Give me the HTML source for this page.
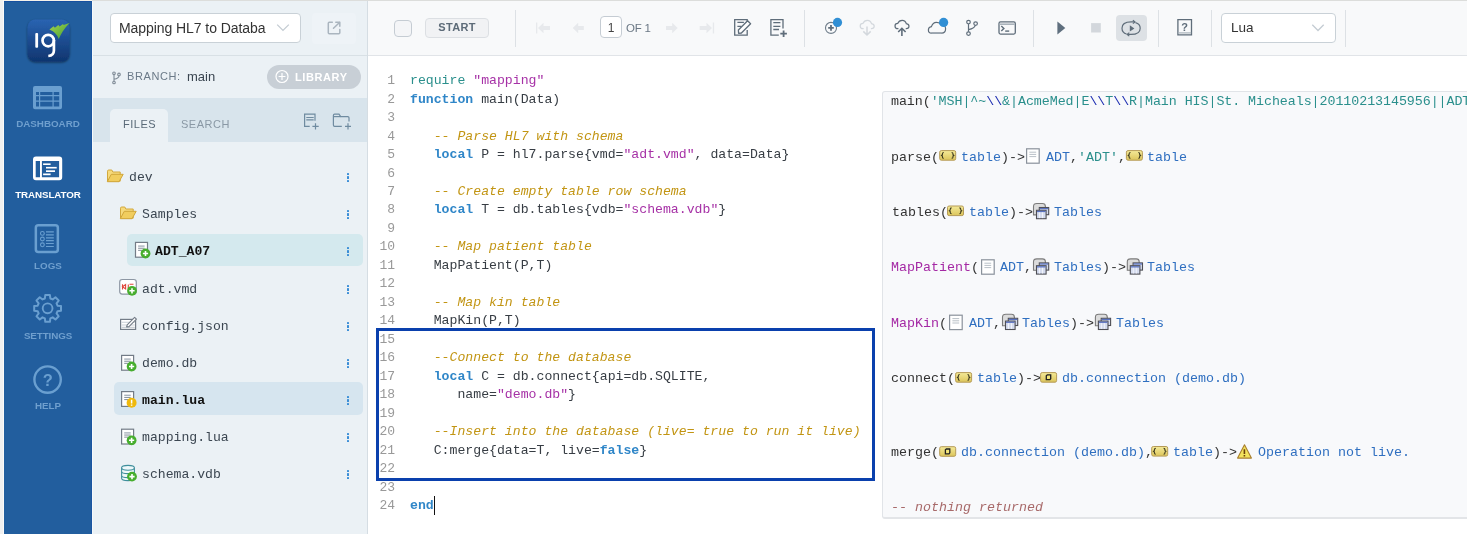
<!DOCTYPE html>
<html><head><meta charset="utf-8">
<style>
*{box-sizing:border-box;margin:0;padding:0}
html,body{width:1467px;height:534px;overflow:hidden;background:#f0f0f0;font-family:"Liberation Sans",sans-serif}
.abs{position:absolute}
.code,.ln,.orow,.fname,.navlbl,#panel>div.abs,#toolbar>div.abs{will-change:transform}
#nav{position:absolute;left:4px;top:1px;width:88px;height:533px;background:#225e9e}
#panel{position:absolute;left:92px;top:1px;width:276px;height:533px;background:#ebf1f5;border-right:1px solid #d5dde3}
#main{position:absolute;left:368px;top:1px;width:1099px;height:533px;background:#fff}
#toolbar{position:absolute;left:0;top:0;width:1099px;height:55px;background:#f8f9fa;border-bottom:1px solid #e1e4e8}
.navlbl{position:absolute;left:0;width:88px;text-align:center;font-size:9.8px;font-weight:bold;letter-spacing:0px;color:#6f9fce;line-height:12px}
.mono{font-family:"Liberation Mono",monospace}
.code{position:absolute;left:0;top:0;font-family:"Liberation Mono",monospace;font-size:13.18px;line-height:18.47px;white-space:pre;color:#373d44}
.ln{position:absolute;left:0;width:27px;text-align:right;color:#999;font-family:"Liberation Mono",monospace;font-size:13px;line-height:18.47px}
.row{position:absolute;left:0;width:276px;height:32px}
.fname{position:absolute;font-family:"Liberation Mono",monospace;font-size:13.15px;margin-left:0.5px;color:#3b4651;top:2px;line-height:32px}
.keb{position:absolute;left:255px;top:13px;width:2px;height:10px}
.keb i{display:block;width:2px;height:2.4px;background:#3a8dd6;margin-bottom:1.1px;border-radius:0.6px}
.sep{position:absolute;top:9px;width:1px;height:37px;background:#dde1e5}
.kw{color:#2f86c8;font-weight:bold}
.rq{color:#2a8f8c}
.st{color:#a631a6}
.cm{color:#c29513;font-style:italic}
.out{position:absolute;left:514px;top:90px;width:600px;height:427px;background:#f8f9fb;border:1px solid #e2e5e9;border-radius:2px}
.orow{position:absolute;font-family:"Liberation Mono",monospace;font-size:13.333px;color:#333;white-space:pre;line-height:16px}
.ob{color:#2f6fc0}
.os{color:#2a8f8c}
.obs{color:#1a2ab0}
.om{color:#a428a4}
</style></head>
<body>
<!-- left nav -->
<div id="nav">
  <div class="navlbl" style="top:117px">DASHBOARD</div>
  <div class="navlbl" style="top:188px;color:#fff;letter-spacing:-0.1px">TRANSLATOR</div>
  <div class="navlbl" style="top:259px">LOGS</div>
  <div class="navlbl" style="top:329px;letter-spacing:-0.1px">SETTINGS</div>
  <div class="navlbl" style="top:399px">HELP</div>
</div>
<svg class="abs" style="left:0;top:0" width="92" height="534" viewBox="0 0 92 534">
  <defs>
    <linearGradient id="lg" x1="0" y1="0" x2="0" y2="1"><stop offset="0" stop-color="#2a64b2"/><stop offset="1" stop-color="#0f356f"/></linearGradient>
    <linearGradient id="gg" x1="0" y1="0" x2="1" y2="1"><stop offset="0" stop-color="#a6d24c"/><stop offset="1" stop-color="#3fa037"/></linearGradient>
    <filter id="sh" x="-20%" y="-20%" width="140%" height="140%"><feGaussianBlur in="SourceAlpha" stdDeviation="1.2"/><feOffset dy="1"/><feComponentTransfer><feFuncA type="linear" slope="0.5"/></feComponentTransfer><feMerge><feMergeNode/><feMergeNode in="SourceGraphic"/></feMerge></filter>
  </defs>
  <rect x="27.5" y="19.5" width="42" height="42" rx="8" fill="url(#lg)" filter="url(#sh)"/>
  <rect x="35.3" y="33.1" width="2.8" height="14.6" rx="1" fill="#fff"/>
  <circle cx="48.2" cy="40.6" r="5.7" fill="none" stroke="#fff" stroke-width="2.7"/>
  <path d="M53.9 40 V50.5 Q53.9 55.6 48.3 56" fill="none" stroke="#fff" stroke-width="2.7"/>
  <path d="M49.4 29.4 L53.6 26.3 L54.9 27.8 L58.3 25 L59.6 26.5 L63 24 L63.6 24.9 L69.6 22.9 Q62.5 30 58.7 39.1 Q57 32.5 49.4 29.4 Z" fill="url(#gg)"/>
  <g fill="#6a9fd0">
    <path d="M35 86 H60 Q62 86 62 88 V107.3 Q62 109.3 60 109.3 H35 Q33 109.3 33 107.3 V88 Q33 86 35 86 Z M36 92 V95 H39 V92 Z M40.2 92 V95 H52.5 V92 Z M53.7 92 V95 H59.2 V92 Z M36 96.2 V100.5 H39 V96.2 Z M40.2 96.2 V100.5 H52.5 V96.2 Z M53.7 96.2 V100.5 H59.2 V96.2 Z M36 101.7 V106.5 H39 V101.7 Z M40.2 101.7 V106.5 H52.5 V101.7 Z M53.7 101.7 V106.5 H59.2 V101.7 Z" fill-rule="evenodd"/>
  </g>
  <g fill="#fff">
    <path d="M36 156.6 H59.2 Q62.2 156.6 62.2 159.6 V177.3 Q62.2 180.3 59.2 180.3 H36 Q33 180.3 33 177.3 V159.6 Q33 156.6 36 156.6 Z M35.7 161.1 V177.2 H40 V161.1 Z M41.9 161.1 V177.2 H59.1 V161.1 Z" fill-rule="evenodd"/>
    <rect x="43.1" y="163.4" width="7.5" height="1.6"/>
    <rect x="46" y="166.9" width="10.7" height="1.6"/>
    <rect x="46" y="170.3" width="9" height="1.7"/>
    <rect x="43.1" y="173.5" width="7.5" height="1.7"/>
  </g>
  <g fill="none" stroke="#6a9fd0">
    <rect x="35.85" y="225.25" width="22" height="26.7" rx="2.5" stroke-width="2.5"/>
    <circle cx="42.4" cy="233.4" r="1.9" stroke-width="1.1"/>
    <circle cx="42.4" cy="239" r="1.9" stroke-width="1.1"/>
    <circle cx="42.4" cy="244.8" r="1.9" stroke-width="1.1"/>
    <path d="M46 231.9 H53.8 M46 234.9 H53.8 M46 237.9 H53.8 M46 240.7 H53.8 M46 243.5 H53.8 M46 246.5 H53.8" stroke-width="1.2"/>
    <circle cx="47.6" cy="308.3" r="4.9" stroke-width="1.9"/>
    <path id="gear" d="M44.85 298.47 L45.30 295.00 L49.90 295.00 L50.35 298.47 L52.68 299.44 L55.45 297.30 L58.70 300.55 L56.56 303.32 L57.53 305.65 L61.00 306.10 L61.00 310.70 L57.53 311.15 L56.56 313.48 L58.70 316.25 L55.45 319.50 L52.68 317.36 L50.35 318.33 L49.90 321.80 L45.30 321.80 L44.85 318.33 L42.52 317.36 L39.75 319.50 L36.50 316.25 L38.64 313.48 L37.67 311.15 L34.20 310.70 L34.20 306.10 L37.67 305.65 L38.64 303.32 L36.50 300.55 L39.75 297.30 L42.52 299.44 Z" stroke-linejoin="round" stroke-width="2"/>
    <circle cx="47.6" cy="379.6" r="13.2" stroke-width="2.4"/>
  </g>
  <text x="47.75" y="385.8" text-anchor="middle" font-family="Liberation Sans" font-weight="bold" font-size="16.5" fill="#6a9fd0">?</text>
</svg>
<!-- file panel -->
<div id="panel">
  <div class="abs" style="left:18px;top:12px;width:191px;height:30px;background:#fff;border:1px solid #c9d1d7;border-radius:4px"></div>
  <div class="abs" style="left:27px;top:19px;font-size:14px;color:#333;letter-spacing:-0.07px">Mapping HL7 to Databa</div>
  <div class="abs" style="left:220px;top:12px;width:44px;height:31px;background:#eef3f7;border-radius:4px"></div>
  <div class="abs" style="left:0;top:54px;width:275px;height:1px;background:#d8e0e5"></div>
  <div class="abs" style="left:35px;top:69px;font-size:11px;color:#6b7a88;letter-spacing:0.6px">BRANCH:</div><div class="abs" style="left:94.5px;top:68px;font-size:13px;color:#3a4550">main</div>
  <div class="abs" style="left:175px;top:64px;width:94px;height:24px;border-radius:12px;background:#c8cfd6"></div>
  <div class="abs" style="left:203px;top:70px;font-size:11px;font-weight:bold;color:#fff;letter-spacing:0.6px">LIBRARY</div>
  <div class="abs" style="left:0;top:97px;width:275px;height:44px;background:#d8e4ec"></div>
  <div class="abs" style="left:18px;top:108px;width:58px;height:33px;background:#ebf1f5;border-radius:5px 5px 0 0"></div>
  <div class="abs" style="left:31px;top:117px;font-size:11px;color:#5a6a78;letter-spacing:0.5px">FILES</div>
  <div class="abs" style="left:89px;top:117px;font-size:11px;color:#8a98a5;letter-spacing:0.5px">SEARCH</div>

  <div class="row" style="top:159px"><span class="fname" style="left:36px">dev</span><div class="keb"><i></i><i></i><i></i></div></div>
  <div class="row" style="top:196px"><span class="fname" style="left:49px">Samples</span><div class="keb"><i></i><i></i><i></i></div></div>
  <div class="abs" style="left:35px;top:233px;width:236px;height:32px;background:#d4e9ee;border-radius:5px"></div>
  <div class="row" style="top:233px"><span class="fname" style="left:62px;font-weight:bold;color:#111">ADT_A07</span><div class="keb"><i></i><i></i><i></i></div></div>
  <div class="row" style="top:271px"><span class="fname" style="left:49px">adt.vmd</span><div class="keb"><i></i><i></i><i></i></div></div>
  <div class="row" style="top:308px"><span class="fname" style="left:49px">config.json</span><div class="keb"><i></i><i></i><i></i></div></div>
  <div class="row" style="top:345px"><span class="fname" style="left:49px">demo.db</span><div class="keb"><i></i><i></i><i></i></div></div>
  <div class="abs" style="left:22px;top:381px;width:249px;height:33px;background:#d6e5ef;border-radius:5px"></div>
  <div class="row" style="top:382px"><span class="fname" style="left:49px;font-weight:bold;color:#111">main.lua</span><div class="keb"><i></i><i></i><i></i></div></div>
  <div class="row" style="top:419px"><span class="fname" style="left:49px">mapping.lua</span><div class="keb"><i></i><i></i><i></i></div></div>
  <div class="row" style="top:456px"><span class="fname" style="left:49px">schema.vdb</span><div class="keb"><i></i><i></i><i></i></div></div>
</div>

<svg class="abs" style="left:0;top:0;pointer-events:none" width="1467" height="534" viewBox="0 0 1467 534">
<path d="M107.5 171.2 Q107.5 170 108.7 170 H111.8 L112.8 172 H120.2 V181.2 H107.5 Z" fill="#f6da7c" stroke="#d2a83c" stroke-width="1"/><path d="M111.3 174.3 H123.2 L119 181.7 H107.3 Z" fill="#f1cd5e" stroke="#cfa53a" stroke-width="1" stroke-linejoin="round"/>
<path d="M120.5 208.2 Q120.5 207 121.7 207 H124.8 L125.8 209 H133.2 V218.2 H120.5 Z" fill="#f6da7c" stroke="#d2a83c" stroke-width="1"/><path d="M124.3 211.3 H136.2 L132 218.7 H120.3 Z" fill="#f1cd5e" stroke="#cfa53a" stroke-width="1" stroke-linejoin="round"/>
<rect x="135.5" y="242.4" width="12" height="14.8" fill="#fff" stroke="#737c87" stroke-width="1.2"/><rect x="138.1" y="245.4" width="6.5" height="1.4" fill="#a9b2bb"/><rect x="138.1" y="247.70000000000002" width="6.5" height="1.1" fill="#8d97a1"/><rect x="138.1" y="249.8" width="4" height="1.1" fill="#8d97a1"/><circle cx="145.5" cy="253.5" r="4.9" fill="#47ae2e"/><path d="M142.9 253.5 H148.1 M145.5 250.9 V256.1" stroke="#fff" stroke-width="1.6"/>
<rect x="121.6" y="355.40000000000003" width="12" height="14.8" fill="#fff" stroke="#737c87" stroke-width="1.2"/><rect x="124.2" y="358.40000000000003" width="6.5" height="1.4" fill="#a9b2bb"/><rect x="124.2" y="360.7" width="6.5" height="1.1" fill="#8d97a1"/><rect x="124.2" y="362.8" width="4" height="1.1" fill="#8d97a1"/><circle cx="131.6" cy="366.5" r="4.9" fill="#47ae2e"/><path d="M129.0 366.5 H134.2 M131.6 363.9 V369.1" stroke="#fff" stroke-width="1.6"/>
<rect x="121.6" y="391.6" width="12" height="14.8" fill="#fff" stroke="#737c87" stroke-width="1.2"/><rect x="124.2" y="394.6" width="6.5" height="1.4" fill="#a9b2bb"/><rect x="124.2" y="396.9" width="6.5" height="1.1" fill="#8d97a1"/><rect x="124.2" y="399.0" width="4" height="1.1" fill="#8d97a1"/><circle cx="131.6" cy="402.7" r="5" fill="#efb90c"/><path d="M131.6 399.7 V403.5 M131.6 404.5 V405.7" stroke="#fff" stroke-width="1.5"/>
<rect x="121.6" y="429.20000000000005" width="12" height="14.8" fill="#fff" stroke="#737c87" stroke-width="1.2"/><rect x="124.2" y="432.20000000000005" width="6.5" height="1.4" fill="#a9b2bb"/><rect x="124.2" y="434.5" width="6.5" height="1.1" fill="#8d97a1"/><rect x="124.2" y="436.6" width="4" height="1.1" fill="#8d97a1"/><circle cx="131.6" cy="440.3" r="4.9" fill="#47ae2e"/><path d="M129.0 440.3 H134.2 M131.6 437.7 V442.90000000000003" stroke="#fff" stroke-width="1.6"/>
<rect x="119.7" y="279.5" width="16.6" height="14.6" rx="2.5" fill="#fff" stroke="#8d97a3" stroke-width="1.2"/>
<path d="M122.5 284.2 V289.5 M122.5 286.8 L125.6 284.6 V289 Z M128.3 284.5 V289.5 M129.5 284.3 H133.5" stroke="#e0483c" stroke-width="1.1" fill="none"/>
<circle cx="132" cy="290.8" r="4.9" fill="#47ae2e"/><path d="M129.4 290.8 H134.6 M132 288.2 V293.40000000000003" stroke="#fff" stroke-width="1.6"/>
<rect x="120.6" y="319.4" width="15" height="10" fill="#fff" stroke="#737c87" stroke-width="1.2"/>
<path d="M121.5 322.3 H134.8 M121.5 325 H134.8 M121.5 327.4 H134.8" stroke="#c9d0d6" stroke-width="1.1"/>
<path d="M126.6 327 L127.2 324.8 L134.6 317.4 L136.4 319.2 L129 326.6 Z" fill="#fff" stroke="#737c87" stroke-width="1.1" stroke-linejoin="round"/>
<g fill="#eef8fa" stroke="#3f8f9c" stroke-width="1.1"><path d="M121.6 475.5 V478.3 Q121.6 480.6 128 480.6 Q134.4 480.6 134.4 478.3 V475.5"/><path d="M121.6 471.5 V475.5 Q121.6 477.6 128 477.6 Q134.4 477.6 134.4 475.5 V471.5"/><path d="M121.6 467.8 V471.5 Q121.6 473.6 128 473.6 Q134.4 473.6 134.4 471.5 V467.8"/><ellipse cx="128" cy="467.8" rx="6.4" ry="2.4"/></g>
<circle cx="132" cy="476.6" r="4.9" fill="#47ae2e"/><path d="M129.4 476.6 H134.6 M132 474.0 V479.20000000000005" stroke="#fff" stroke-width="1.6"/>
<g fill="none" stroke="#808c97" stroke-width="1.1"><circle cx="114" cy="73.3" r="1.3"/><circle cx="114" cy="82.5" r="1.3"/><circle cx="119" cy="74.4" r="1.3"/><path d="M114 74.6 V81.2 M119 75.7 Q119 78.3 114 79.2"/></g>
<g fill="none" stroke="#fff" stroke-width="1.2"><circle cx="282" cy="76.5" r="6"/><path d="M278.6 76.5 H285.4 M282 73.1 V79.9"/></g>
<g fill="none" stroke="#6f8ba0" stroke-width="1.2"><path d="M309.7 126.3 H304.6 V114.2 H315 V120.7"/><path d="M306.3 117.5 H313.7 M306.3 119.9 H313.7"/><path d="M312.4 126.3 H318.7 M315.5 123.3 V129.4"/><path d="M341.8 126.3 H334.6 Q333.4 126.3 333.4 125 V115.5 Q333.4 114.2 334.6 114.2 H339 L340.7 116.6 H347.8 Q349 116.6 349 117.8 V121.6"/><path d="M333.4 116.6 H340.7"/><path d="M345 126.3 H351 M348 123.3 V129.4"/></g>
<path d="M277.2 24.6 L283 30.4 L288.8 24.6" fill="none" stroke="#c4ccd3" stroke-width="1.3"/>
<g fill="none" stroke="#aab5bf" stroke-width="1.5" stroke-linecap="round" stroke-linejoin="round"><path d="M332.3 22.3 H329.3 Q328.3 22.3 328.3 23.3 V32.8 Q328.3 33.8 329.3 33.8 H338.8 Q339.8 33.8 339.8 32.8 V29.6"/><path d="M333.5 28.3 L339.8 22.2 M335.8 22.2 H339.8 V26.2"/></g>
</svg>
<!-- main -->
<div id="main">
  <div id="toolbar">
    <div class="abs" style="left:26px;top:19px;width:18px;height:17px;border:1px solid #c5ccd3;border-radius:4px;background:#f4f5f7"></div>
    <div class="abs" style="left:57px;top:17px;width:64px;height:20px;border:1px solid #dcdfe3;border-radius:4px;background:#f1f2f4"></div>
    <div class="abs" style="left:57px;top:20px;width:64px;text-align:center;font-size:11px;font-weight:bold;color:#5d6b78;letter-spacing:0.3px">START</div>
    <div class="sep" style="left:147px"></div>
    <div class="abs" style="left:232px;top:15px;width:22px;height:22px;border:1px solid #c5ccd3;border-radius:4px;background:#fff"></div>
    <div class="abs" style="left:232px;top:20px;width:22px;text-align:center;font-size:12px;color:#444">1</div>
    <div class="abs" style="left:258px;top:20.5px;font-size:11.5px;color:#6b7885;letter-spacing:-0.2px">OF 1</div>
    <div class="sep" style="left:436px"></div>
    <div class="sep" style="left:665px"></div>
    <div class="abs" style="left:748px;top:14px;width:31px;height:26px;background:#dde1e5;border-radius:4px"></div>
    <div class="sep" style="left:790px"></div>
    <div class="sep" style="left:843px"></div>
    <div class="abs" style="left:853px;top:12px;width:115px;height:30px;border:1px solid #c9d1d7;border-radius:4px;background:#fff"></div>
    <div class="abs" style="left:863px;top:19px;font-size:13.5px;color:#333">Lua</div>
    <div class="sep" style="left:977px"></div>
  </div>

  <!-- gutter & code -->
  <div class="abs" style="left:0;top:69px;width:1px;height:1px">
  </div>
</div>
<div class="abs" style="left:882px;top:91px;width:600px;height:428px;background:#f8f9fb;border:1px solid #e1e4e8;border-bottom:2px solid #e3e5e8;border-radius:3px"></div>
<div class="orow" style="left:890.9px;top:94.25px;letter-spacing:-0.063px"><span style="color:#333">main(</span><span style="color:#2a8f8c">'MSH|^~</span><span style="color:#1a2ab0">\\</span><span style="color:#2a8f8c">&amp;|AcmeMed|E</span><span style="color:#1a2ab0">\\</span><span style="color:#2a8f8c">T</span><span style="color:#1a2ab0">\\</span><span style="color:#2a8f8c">R|Main HIS|St. Micheals|20110213145956||ADT^A07|MSG00001|P|2.6</span></div>
<div class="orow" style="left:891.2px;top:149.65px"><span style="color:#333">parse(</span></div>
<div class="orow" style="left:961.3px;top:149.65px"><span style="color:#2f6fc0">table</span><span style="color:#333">)-&gt;</span></div>
<div class="orow" style="left:1045.5px;top:149.65px"><span style="color:#2f6fc0">ADT</span><span style="color:#333">,</span><span style="color:#2a8f8c">'ADT'</span><span style="color:#333">,</span></div>
<div class="orow" style="left:1147.4px;top:149.65px"><span style="color:#2f6fc0">table</span></div>
<div class="orow" style="left:891.5px;top:205.05px"><span style="color:#333">tables(</span></div>
<div class="orow" style="left:969.2px;top:205.05px"><span style="color:#2f6fc0">table</span><span style="color:#333">)-&gt;</span></div>
<div class="orow" style="left:1053.7px;top:205.05px"><span style="color:#2f6fc0">Tables</span></div>
<div class="orow" style="left:890.5px;top:260.45px"><span style="color:#a428a4">MapPatient</span><span style="color:#333">(</span></div>
<div class="orow" style="left:999.6px;top:260.45px"><span style="color:#2f6fc0">ADT</span><span style="color:#333">,</span></div>
<div class="orow" style="left:1053.7px;top:260.45px"><span style="color:#2f6fc0">Tables</span><span style="color:#333">)-&gt;</span></div>
<div class="orow" style="left:1146.9px;top:260.45px"><span style="color:#2f6fc0">Tables</span></div>
<div class="orow" style="left:891.0px;top:315.85px"><span style="color:#a428a4">MapKin</span><span style="color:#333">(</span></div>
<div class="orow" style="left:968.7px;top:315.85px"><span style="color:#2f6fc0">ADT</span><span style="color:#333">,</span></div>
<div class="orow" style="left:1022.4px;top:315.85px"><span style="color:#2f6fc0">Tables</span><span style="color:#333">)-&gt;</span></div>
<div class="orow" style="left:1115.5px;top:315.85px"><span style="color:#2f6fc0">Tables</span></div>
<div class="orow" style="left:891.0px;top:371.25px"><span style="color:#333">connect(</span></div>
<div class="orow" style="left:976.8px;top:371.25px"><span style="color:#2f6fc0">table</span><span style="color:#333">)-&gt;</span></div>
<div class="orow" style="left:1061.8px;top:371.25px"><span style="color:#2f6fc0">db.connection (demo.db)</span></div>
<div class="orow" style="left:890.6px;top:445.15px"><span style="color:#333">merge(</span></div>
<div class="orow" style="left:960.7px;top:445.15px"><span style="color:#2f6fc0">db.connection (demo.db)</span><span style="color:#333">,</span></div>
<div class="orow" style="left:1172.8px;top:445.15px"><span style="color:#2f6fc0">table</span><span style="color:#333">)-&gt;</span></div>
<div class="orow" style="left:1258.0px;top:445.15px"><span style="color:#2f6fc0">Operation not live.</span></div>
<div class="orow" style="left:891.2px;top:499.8px"><span style="color:#a86a6a;font-style:italic">-- nothing returned</span></div>
<svg class="abs" style="left:0;top:0;pointer-events:none" width="1467" height="534" viewBox="0 0 1467 534"><defs><linearGradient id="yg" x1="0" y1="0" x2="0" y2="1"><stop offset="0" stop-color="#f4ea99"/><stop offset="1" stop-color="#dcc55a"/></linearGradient></defs><rect x="939.7" y="150.6" width="16" height="9.6" rx="1.6" fill="url(#yg)" stroke="#b59a57" stroke-width="1"/><path d="M943.8000000000001 152.5 Q942.4000000000001 152.5 942.4000000000001 153.9 V154.7 L941.5 155.4 L942.4000000000001 156.1 V156.9 Q942.4000000000001 158.29999999999998 943.8000000000001 158.29999999999998" fill="none" stroke="#3d3a20" stroke-width="1.1"/><path d="M951.6 152.5 Q953.0 152.5 953.0 153.9 V154.7 L953.9000000000001 155.4 L953.0 156.1 V156.9 Q953.0 158.29999999999998 951.6 158.29999999999998" fill="none" stroke="#3d3a20" stroke-width="1.1"/><rect x="1026.6" y="148.79999999999998" width="12.6" height="14.4" fill="#fff" stroke="#8a929b" stroke-width="1.2"/><path d="M1029.4 152.2 H1036.2 M1029.4 154.39999999999998 H1036.2 M1029.4 156.6 H1036.2" stroke="#b9c0c7" stroke-width="1"/><rect x="1126.4" y="150.6" width="16" height="9.6" rx="1.6" fill="url(#yg)" stroke="#b59a57" stroke-width="1"/><path d="M1130.5 152.5 Q1129.1000000000001 152.5 1129.1000000000001 153.9 V154.7 L1128.2 155.4 L1129.1000000000001 156.1 V156.9 Q1129.1000000000001 158.29999999999998 1130.5 158.29999999999998" fill="none" stroke="#3d3a20" stroke-width="1.1"/><path d="M1138.3000000000002 152.5 Q1139.7 152.5 1139.7 153.9 V154.7 L1140.6000000000001 155.4 L1139.7 156.1 V156.9 Q1139.7 158.29999999999998 1138.3000000000002 158.29999999999998" fill="none" stroke="#3d3a20" stroke-width="1.1"/><rect x="947.5" y="206.0" width="16" height="9.6" rx="1.6" fill="url(#yg)" stroke="#b59a57" stroke-width="1"/><path d="M951.6 207.9 Q950.2 207.9 950.2 209.3 V210.1 L949.3 210.8 L950.2 211.5 V212.3 Q950.2 213.7 951.6 213.7" fill="none" stroke="#3d3a20" stroke-width="1.1"/><path d="M959.4 207.9 Q960.8 207.9 960.8 209.3 V210.1 L961.7 210.8 L960.8 211.5 V212.3 Q960.8 213.7 959.4 213.7" fill="none" stroke="#3d3a20" stroke-width="1.1"/><path d="M1033.5 206.4 Q1033.5 203.5 1036.9 203.5 H1042.4 Q1045.4 203.5 1045.4 206.4 V214.9 H1033.5 Z" fill="#dcdcdc" stroke="#7b7b7b" stroke-width="1.1"/><rect x="1039.3000000000002" y="207.5" width="9.4" height="7.2" fill="#d5dcef" stroke="#4f4f55" stroke-width="1.1"/><rect x="1039.8000000000002" y="208.0" width="8.4" height="1.2" fill="#5a72c0"/><rect x="1036.5" y="210.3" width="9.6" height="8.4" fill="#d5dcef" stroke="#4f4f55" stroke-width="1.1"/><rect x="1037.0" y="210.8" width="8.6" height="1.3" fill="#5a72c0"/><path d="M1039.5 212.4 V218.1 M1042.5 212.4 V218.1" stroke="#f4f6fb" stroke-width="0.9"/><rect x="981.6" y="259.8" width="12.6" height="14.4" fill="#fff" stroke="#8a929b" stroke-width="1.2"/><path d="M984.4 263.2 H991.2 M984.4 265.4 H991.2 M984.4 267.59999999999997 H991.2" stroke="#b9c0c7" stroke-width="1"/><path d="M1033.5 261.8 Q1033.5 258.90000000000003 1036.9 258.90000000000003 H1042.4 Q1045.4 258.90000000000003 1045.4 261.8 V270.3 H1033.5 Z" fill="#dcdcdc" stroke="#7b7b7b" stroke-width="1.1"/><rect x="1039.3000000000002" y="262.90000000000003" width="9.4" height="7.2" fill="#d5dcef" stroke="#4f4f55" stroke-width="1.1"/><rect x="1039.8000000000002" y="263.40000000000003" width="8.4" height="1.2" fill="#5a72c0"/><rect x="1036.5" y="265.7" width="9.6" height="8.4" fill="#d5dcef" stroke="#4f4f55" stroke-width="1.1"/><rect x="1037.0" y="266.2" width="8.6" height="1.3" fill="#5a72c0"/><path d="M1039.5 267.8 V273.5 M1042.5 267.8 V273.5" stroke="#f4f6fb" stroke-width="0.9"/><path d="M1127.3 261.8 Q1127.3 258.90000000000003 1130.7 258.90000000000003 H1136.2 Q1139.2 258.90000000000003 1139.2 261.8 V270.3 H1127.3 Z" fill="#dcdcdc" stroke="#7b7b7b" stroke-width="1.1"/><rect x="1133.1000000000001" y="262.90000000000003" width="9.4" height="7.2" fill="#d5dcef" stroke="#4f4f55" stroke-width="1.1"/><rect x="1133.6000000000001" y="263.40000000000003" width="8.4" height="1.2" fill="#5a72c0"/><rect x="1130.3" y="265.7" width="9.6" height="8.4" fill="#d5dcef" stroke="#4f4f55" stroke-width="1.1"/><rect x="1130.8" y="266.2" width="8.6" height="1.3" fill="#5a72c0"/><path d="M1133.3 267.8 V273.5 M1136.3 267.8 V273.5" stroke="#f4f6fb" stroke-width="0.9"/><rect x="949.6" y="315.20000000000005" width="12.6" height="14.4" fill="#fff" stroke="#8a929b" stroke-width="1.2"/><path d="M952.4 318.6 H959.2 M952.4 320.8 H959.2 M952.4 323.0 H959.2" stroke="#b9c0c7" stroke-width="1"/><path d="M1002.5 317.2 Q1002.5 314.3 1005.9 314.3 H1011.4 Q1014.4 314.3 1014.4 317.2 V325.7 H1002.5 Z" fill="#dcdcdc" stroke="#7b7b7b" stroke-width="1.1"/><rect x="1008.3" y="318.3" width="9.4" height="7.2" fill="#d5dcef" stroke="#4f4f55" stroke-width="1.1"/><rect x="1008.8" y="318.8" width="8.4" height="1.2" fill="#5a72c0"/><rect x="1005.5" y="321.09999999999997" width="9.6" height="8.4" fill="#d5dcef" stroke="#4f4f55" stroke-width="1.1"/><rect x="1006.0" y="321.59999999999997" width="8.6" height="1.3" fill="#5a72c0"/><path d="M1008.5 323.2 V328.9 M1011.5 323.2 V328.9" stroke="#f4f6fb" stroke-width="0.9"/><path d="M1095.3999999999999 317.2 Q1095.3999999999999 314.3 1098.8 314.3 H1104.3 Q1107.3 314.3 1107.3 317.2 V325.7 H1095.3999999999999 Z" fill="#dcdcdc" stroke="#7b7b7b" stroke-width="1.1"/><rect x="1101.2" y="318.3" width="9.4" height="7.2" fill="#d5dcef" stroke="#4f4f55" stroke-width="1.1"/><rect x="1101.7" y="318.8" width="8.4" height="1.2" fill="#5a72c0"/><rect x="1098.3999999999999" y="321.09999999999997" width="9.6" height="8.4" fill="#d5dcef" stroke="#4f4f55" stroke-width="1.1"/><rect x="1098.8999999999999" y="321.59999999999997" width="8.6" height="1.3" fill="#5a72c0"/><path d="M1101.3999999999999 323.2 V328.9 M1104.3999999999999 323.2 V328.9" stroke="#f4f6fb" stroke-width="0.9"/><rect x="955.6" y="372.6" width="16" height="9.6" rx="1.6" fill="url(#yg)" stroke="#b59a57" stroke-width="1"/><path d="M959.7 374.5 Q958.3000000000001 374.5 958.3000000000001 375.90000000000003 V376.70000000000005 L957.4 377.40000000000003 L958.3000000000001 378.1 V378.90000000000003 Q958.3000000000001 380.3 959.7 380.3" fill="none" stroke="#3d3a20" stroke-width="1.1"/><path d="M967.5 374.5 Q968.9 374.5 968.9 375.90000000000003 V376.70000000000005 L969.8000000000001 377.40000000000003 L968.9 378.1 V378.90000000000003 Q968.9 380.3 967.5 380.3" fill="none" stroke="#3d3a20" stroke-width="1.1"/><rect x="1040.6" y="372.6" width="16" height="9.6" rx="1.6" fill="url(#yg)" stroke="#b59a57" stroke-width="1"/><path d="M1046.3 375.70000000000005 L1047.3 374.90000000000003 H1050.6999999999998 V378.70000000000005 L1049.8999999999999 379.70000000000005 H1046.3 Z" fill="#f3e67a" stroke="#222" stroke-width="1.3"/><rect x="939.7" y="446.7" width="16" height="9.6" rx="1.6" fill="url(#yg)" stroke="#b59a57" stroke-width="1"/><path d="M945.4000000000001 449.8 L946.4000000000001 449.0 H949.8000000000001 V452.8 L949.0 453.8 H945.4000000000001 Z" fill="#f3e67a" stroke="#222" stroke-width="1.3"/><rect x="1151.7" y="446.5" width="16" height="9.6" rx="1.6" fill="url(#yg)" stroke="#b59a57" stroke-width="1"/><path d="M1155.8 448.4 Q1154.4 448.4 1154.4 449.8 V450.6 L1153.5 451.3 L1154.4 452 V452.8 Q1154.4 454.2 1155.8 454.2" fill="none" stroke="#3d3a20" stroke-width="1.1"/><path d="M1163.6000000000001 448.4 Q1165.0 448.4 1165.0 449.8 V450.6 L1165.9 451.3 L1165.0 452 V452.8 Q1165.0 454.2 1163.6000000000001 454.2" fill="none" stroke="#3d3a20" stroke-width="1.1"/><path d="M1244.5 444.7 L1251.3999999999999 458.09999999999997 H1237.6 Z" fill="#f2e25c" stroke="#a87e2e" stroke-width="1.1" stroke-linejoin="round"/><path d="M1244.3999999999999 449.29999999999995 V454.09999999999997 M1244.3999999999999 455.09999999999997 V456.5" stroke="#6b3f0c" stroke-width="1.6"/></svg>

<div class="ln" style="left:368px;top:71.50px">1</div>
<div class="code" style="left:410px;top:71.50px"><span class="rq">require</span> <span class="st">"mapping"</span></div>
<div class="ln" style="left:368px;top:90.50px">2</div>
<div class="code" style="left:410px;top:90.50px"><span class="kw">function</span> main(Data)</div>
<div class="ln" style="left:368px;top:108.50px">3</div>
<div class="ln" style="left:368px;top:127.50px">4</div>
<div class="code" style="left:410px;top:127.50px">   <span class="cm">-- Parse HL7 with schema</span></div>
<div class="ln" style="left:368px;top:145.50px">5</div>
<div class="code" style="left:410px;top:145.50px">   <span class="kw">local</span> P = hl7.parse{vmd=<span class="st">"adt.vmd"</span>, data=Data}</div>
<div class="ln" style="left:368px;top:164.50px">6</div>
<div class="ln" style="left:368px;top:182.50px">7</div>
<div class="code" style="left:410px;top:182.50px">   <span class="cm">-- Create empty table row schema</span></div>
<div class="ln" style="left:368px;top:200.50px">8</div>
<div class="code" style="left:410px;top:200.50px">   <span class="kw">local</span> T = db.tables{vdb=<span class="st">"schema.vdb"</span>}</div>
<div class="ln" style="left:368px;top:219.50px">9</div>
<div class="ln" style="left:368px;top:237.50px">10</div>
<div class="code" style="left:410px;top:237.50px">   <span class="cm">-- Map patient table</span></div>
<div class="ln" style="left:368px;top:256.50px">11</div>
<div class="code" style="left:410px;top:256.50px">   MapPatient(P,T)</div>
<div class="ln" style="left:368px;top:274.50px">12</div>
<div class="ln" style="left:368px;top:293.50px">13</div>
<div class="code" style="left:410px;top:293.50px">   <span class="cm">-- Map kin table</span></div>
<div class="ln" style="left:368px;top:311.50px">14</div>
<div class="code" style="left:410px;top:311.50px">   MapKin(P,T)</div>
<div class="ln" style="left:368px;top:330.50px">15</div>
<div class="ln" style="left:368px;top:348.50px">16</div>
<div class="code" style="left:410px;top:348.50px">   <span class="cm">--Connect to the database</span></div>
<div class="ln" style="left:368px;top:367.50px">17</div>
<div class="code" style="left:410px;top:367.50px">   <span class="kw">local</span> C = db.connect{api=db.SQLITE,</div>
<div class="ln" style="left:368px;top:385.50px">18</div>
<div class="code" style="left:410px;top:385.50px">      name=<span class="st">"demo.db"</span>}</div>
<div class="ln" style="left:368px;top:404.50px">19</div>
<div class="ln" style="left:368px;top:422.50px">20</div>
<div class="code" style="left:410px;top:422.50px">   <span class="cm">--Insert into the database (live= true to run it live)</span></div>
<div class="ln" style="left:368px;top:441.50px">21</div>
<div class="code" style="left:410px;top:441.50px">   C:merge{data=T, live=<span class="kw">false</span>}</div>
<div class="ln" style="left:368px;top:459.50px">22</div>
<div class="ln" style="left:368px;top:478.50px">23</div>
<div class="ln" style="left:368px;top:496.50px">24</div>
<div class="code" style="left:410px;top:496.50px"><span class="kw">end</span></div>
<div class="abs" style="left:376px;top:328px;width:499px;height:153px;border:3px solid #0a40ad"></div>
<div class="abs" style="left:434px;top:496px;width:1px;height:19px;background:#111"></div>
<svg class="abs" style="left:0;top:0;pointer-events:none" width="1467" height="534" viewBox="0 0 1467 534">
<rect x="536" y="22.5" width="1.3" height="11" fill="#e7e9ec"/>
<path d="M538 28 L543.5 22.8 V26 H550 V30 H543.5 V33.2 Z" fill="#e7e9ec"/>
<path d="M572.7 28 L578.2 22.8 V26 H583.8 V30 H578.2 V33.2 Z" fill="#e7e9ec"/>
<path d="M677.7 28 L672.2 22.8 V26 H666 V30 H672.2 V33.2 Z" fill="#e7e9ec"/>
<path d="M712 28 L706.5 22.8 V26 H699.7 V30 H706.5 V33.2 Z" fill="#e7e9ec"/>
<rect x="712.8" y="22.5" width="1.3" height="11" fill="#e7e9ec"/>
<g fill="none" stroke="#5f6d7a" stroke-width="1.3"><path d="M747.2 22.5 V19.7 H734.7 V35.1 H747.2 V30"/><path d="M737.4 22.4 H743.9 M737.4 26.3 H741.5"/></g>
<path d="M738.6 33.3 L738.4 30 L747.6 20.8 L750.6 23.8 L741.4 33 Z" fill="#fff" stroke="#5f6d7a" stroke-width="1.3" stroke-linejoin="round"/>
<g fill="none" stroke="#5f6d7a" stroke-width="1.3"><path d="M778.8 35.1 H770.9 V19.7 H783 V28.4"/><path d="M773.3 22.6 H780.4 M773.3 26.3 H780.4 M773.3 29.5 H779"/></g>
<path d="M780.3 33.7 H786.9 M783.6 30.4 V37" stroke="#5f6d7a" stroke-width="1.8"/>
<circle cx="831" cy="27.9" r="5.5" fill="none" stroke="#6f7d8a" stroke-width="1.1"/>
<path d="M828.2 27.9 H833.8 M831 25.1 V30.7" stroke="#5f6d7a" stroke-width="1.8"/>
<circle cx="837.5" cy="22.4" r="4.6" fill="#318fd4"/>
<path d="M863.2 28.700000000000003 Q860.2 28.700000000000003 860.2 25.9 Q860.2 23.3 863.0 23.3 Q864.2 20.3 867.4000000000001 20.3 Q870.7 20.3 871.5 23.7 Q874.2 24.1 874.2 26.3 Q874.2 28.700000000000003 871.4000000000001 28.700000000000003" fill="none" stroke="#d3d8dd" stroke-width="1.2" stroke-linecap="round"/>
<path d="M867 26.5 V35 M863.3 31.4 L867 35 L870.7 31.4" fill="none" stroke="#d3d8dd" stroke-width="1.5"/>
<path d="M898 28.700000000000003 Q895 28.700000000000003 895 25.9 Q895 23.3 897.8 23.3 Q899 20.3 902.2 20.3 Q905.5 20.3 906.3 23.7 Q909 24.1 909 26.3 Q909 28.700000000000003 906.2 28.700000000000003" fill="none" stroke="#5f6d7a" stroke-width="1.2" stroke-linecap="round"/>
<path d="M901.9 28.5 V36 M898.2 32 L901.9 28.3 L905.6 32" fill="none" stroke="#5f6d7a" stroke-width="1.6"/>
<path d="M931.5 33.2 Q928.4 33.2 928.4 30 Q928.4 27 931.4 26.6 Q932.8 22.3 936.4 22.3 Q939 22.3 940.5 24 Q945.6 24.5 945.6 28.8 Q945.6 33.2 941.5 33.2 Z" fill="none" stroke="#5f6d7a" stroke-width="1.2"/>
<path d="M931.5 33.2 H941.5" stroke="#9aa5af" stroke-width="1.6"/>
<circle cx="943.6" cy="22.4" r="4.6" fill="#318fd4"/>
<g fill="none" stroke="#5f6d7a" stroke-width="1.2"><circle cx="968.5" cy="22.1" r="1.8"/><circle cx="968.5" cy="33.6" r="1.8"/><circle cx="975.6" cy="23.6" r="1.8"/><path d="M968.5 23.9 V31.8 M975.2 25.4 Q974.6 28.4 968.6 29.6"/></g>
<g fill="none" stroke="#5f6d7a" stroke-width="1.3"><rect x="999" y="21.9" width="16.3" height="12.2" rx="1.5"/><path d="M999.5 24.2 H1014.8" stroke="#aab3bb" stroke-width="1.6"/><path d="M1001.3 26 L1003.9 28.5 L1001.3 31.1" stroke-width="1.4"/><path d="M1005.2 31.1 H1009.2" stroke-width="1.4"/></g>
<path d="M1057.4 21.5 L1065.3 28 L1057.4 34.5 Z" fill="#5f6f7e"/>
<rect x="1091.1" y="23.1" width="9.7" height="9.4" fill="#d3d7dc"/>
<g fill="none" stroke="#5f6d7a" stroke-width="1.2"><path d="M1135.5 22.6 Q1140.2 23.8 1140.2 28.2 Q1140.2 34.4 1131 34.4 H1127.3"/><path d="M1126.6 34 Q1122 32.7 1122 28.2 Q1122 21.9 1131.2 21.9 H1134.8"/><path d="M1132.9 20.2 L1135 21.9 L1132.9 23.6 M1129.3 32.6 L1127.2 34.4 L1129.3 36.1"/></g>
<path d="M1129.8 25.3 L1134.4 28.4 L1129.8 31.5 Z" fill="#5f6d7a"/>
<g fill="none" stroke="#5f6d7a" stroke-width="1.3"><path d="M1177.9 34.9 V19.6 H1191.5 V34.9 Z"/><path d="M1178.2 32.9 H1191.2" stroke="#aab3bb" stroke-width="1.2"/></g>
<text x="1184.7" y="30.6" text-anchor="middle" font-family="Liberation Sans" font-weight="bold" font-size="11" fill="#5f6d7a">?</text>
<path d="M1312.3 24.8 L1318 30.5 L1323.7 24.8" fill="none" stroke="#c4ccd3" stroke-width="1.3"/>
</svg>
<div class="abs" style="left:0;top:0;width:92px;height:1px;background:#f4f1ea"></div>
<div class="abs" style="left:92px;top:0;width:1375px;height:1px;background:#dcdddb"></div>
<div class="abs" style="left:3px;top:0;width:1px;height:534px;background:#fafafa"></div>
<div class="abs" style="left:4px;top:1px;width:88px;height:1px;background:#1650a0"></div>
<div class="abs" style="left:91px;top:1px;width:1px;height:533px;background:#1a55a2"></div>
<div class="abs" style="left:92px;top:1px;width:1px;height:533px;background:#f5f9fa"></div>
</body></html>
